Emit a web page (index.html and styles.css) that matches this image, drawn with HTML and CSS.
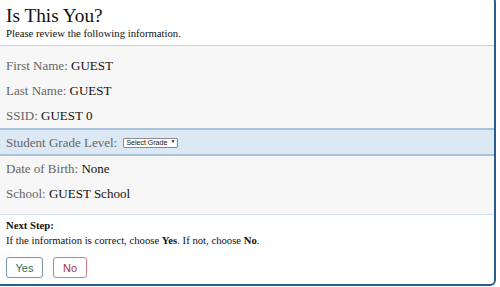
FILE: index.html
```html
<!DOCTYPE html>
<html lang="en">
<head>
  <meta charset="UTF-8" />
  <meta name="viewport" content="width=device-width, initial-scale=1.0">
  <title>Is This You?</title>
  <link rel="stylesheet" href="styles.css">
</head>
<body>
  <div class="modal">
    <div class="modal-header">
      <h1>Is This You?</h1>
      <p class="subtitle">Please review the following information.</p>
    </div>

    <div class="info">
      <div class="row"><span class="label">First Name:</span> GUEST</div>
      <div class="row"><span class="label">Last Name:</span> GUEST</div>
      <div class="row"><span class="label">SSID:</span> GUEST 0</div>
      <div class="row row-grade">
        <span class="label">Student Grade Level:</span>
        <span class="select-wrap">
          <select name="grade">
            <option>Select Grade</option>
            <option>K</option>
            <option>1</option>
            <option>2</option>
          </select>
        </span>
      </div>
      <div class="row"><span class="label">Date of Birth:</span> None</div>
      <div class="row"><span class="label">School:</span> GUEST School</div>
    </div>

    <div class="modal-footer">
      <p class="next-title">Next Step:</p>
      <p class="next-text">If the information is correct, choose <b>Yes</b>. If not, choose <b>No</b>.</p>
      <div class="buttons">
        <button class="btn btn-yes" type="button">Yes</button>
        <button class="btn btn-no" type="button">No</button>
      </div>
    </div>
  </div>
</body>
</html>
```

FILE: styles.css
```css
html, body {
  background: #fff;
  margin: 0;
  padding: 0;
  height: 100%;
  overflow: hidden;
  font-family: 'Liberation Serif', 'Times New Roman', serif;
  color: #111;
}
.modal {
  box-sizing: border-box;
  width: 500px;
  margin: -4px 0 0 -4px;
  border: 2px solid #2a5d8f;
  border-radius: 6px;
  background: #fff;
  overflow: hidden;
}
.modal-header {
  padding: 7px 8px 5px;
  border-bottom: 1px solid #bcd3e8;
}
h1 {
  margin: 0;
  font-size: 19.3px;
  line-height: 22px;
  font-weight: normal;
}
p.subtitle {
  margin: 0;
  font-size: 10.7px;
  line-height: 13px;
}
.info {
  background: #f7f7f7;
  padding: 7px 0 8px;
}
.row {
  padding: 0 8px;
  font-size: 13px;
  line-height: 25px;
  height: 25px;
}
.label {
  color: #666;
}
.row-grade {
  background: #dce9f5;
  border-top: 2px solid #a8c3da;
  border-bottom: 2px solid #a8c3da;
  height: 24px;
  line-height: 24px;
}
.select-wrap {
  position: relative;
  display: inline-block;
  margin-left: 3px;
  vertical-align: 1px;
}
.select-wrap select {
  box-sizing: border-box;
  appearance: none;
  -webkit-appearance: none;
  font-family: 'Liberation Sans', Arial, sans-serif;
  font-size: 7px;
  height: 10px;
  line-height: 8px;
  padding: 0 8px 0 2px;
  width: 55px;
  border: 1px solid #8a8a8a;
  border-radius: 1px;
  background: #fff;
  color: #111;
  vertical-align: middle;
}
.select-wrap::after {
  content: "\25BC";
  position: absolute;
  right: 3px;
  top: 50%;
  transform: translateY(-50%);
  font-size: 5px;
  color: #111;
  pointer-events: none;
}
.modal-footer {
  border-top: 1px solid #d3dfea;
  padding: 3px 8px 6px;
}
.modal-footer p {
  margin: 0;
  font-size: 10.7px;
  line-height: 15px;
}
p.next-title {
  font-weight: bold;
}
.buttons {
  display: flex;
  gap: 10px;
  margin-top: 9px;
}
.btn {
  box-sizing: border-box;
  font-family: 'Liberation Sans', Arial, sans-serif;
  font-size: 11px;
  height: 21px;
  padding: 0;
  background: #fff;
  border-radius: 3px;
  cursor: pointer;
}
.btn-yes {
  width: 37px;
  color: #2f6f5a;
  border: 1px solid #6f95b8;
}
.btn-no {
  width: 34px;
  color: #a92f3a;
  border: 1px solid #d27a80;
}
```
